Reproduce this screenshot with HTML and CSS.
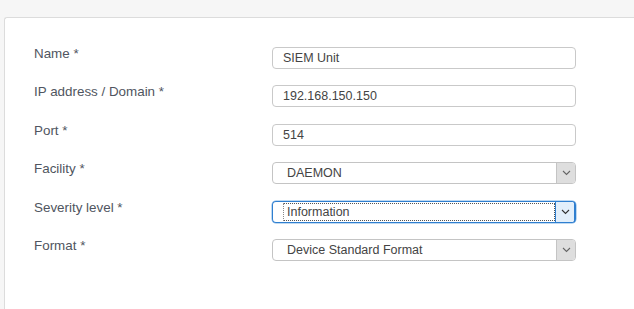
FILE: index.html
```html
<!DOCTYPE html>
<html lang="en">
<head>
    <meta charset="UTF-8">
    <meta name="viewport" content="width=device-width, initial-scale=1.0">
    <title>Syslog Server</title>
    <link rel="stylesheet" href="styles.css">
</head>
<body>
    <div class="card">
        <!-- Campos do servidor syslog -->
        <div class="form">
            <label class="label">Name *</label>
            <div class="input">SIEM Unit</div>

            <label class="label">IP address / Domain *</label>
            <div class="input">192.168.150.150</div>

            <label class="label">Port *</label>
            <div class="input">514</div>

            <label class="label">Facility *</label>
            <div class="select">
                <span class="select-value">DAEMON</span>
                <span class="select-arrow">
                    <svg width="9" height="6" viewBox="0 0 9 6"><path d="M1 1l3.5 3.5L8 1" fill="none" stroke="#666" stroke-width="1.1"/></svg>
                </span>
            </div>

            <label class="label">Severity level *</label>
            <div class="select focused">
                <span class="select-value"><span class="focus-ring">Information</span></span>
                <span class="select-arrow">
                    <svg width="9" height="6" viewBox="0 0 9 6"><path d="M1 1l3.5 3.5L8 1" fill="none" stroke="#333" stroke-width="1.1"/></svg>
                </span>
            </div>

            <label class="label">Format *</label>
            <div class="select">
                <span class="select-value">Device Standard Format</span>
                <span class="select-arrow">
                    <svg width="9" height="6" viewBox="0 0 9 6"><path d="M1 1l3.5 3.5L8 1" fill="none" stroke="#666" stroke-width="1.1"/></svg>
                </span>
            </div>
        </div>
    </div>
</body>
</html>
```

FILE: styles.css
```css
* {
    margin: 0;
    padding: 0;
    box-sizing: border-box;
}

body {
    font-family: "Liberation Sans", Arial, sans-serif;
    background: #f6f6f6;
    color: #555;
    overflow: hidden;
    height: 309px;
}

/* Cartão do formulário */
.card {
    margin: 17px 0 0 4px;
    height: 292px;
    background: #fff;
    border: 1px solid #dcdcdc;
    border-right: none;
    border-bottom: none;
    border-radius: 3px 0 0 0;
    padding: 29px 0 0 29px;
}

.form {
    display: grid;
    grid-template-columns: 238px 304px;
    grid-auto-rows: 22px;
    row-gap: 16.4px;
}

.label {
    font-size: 13.4px;
    color: #505560;
    line-height: 14px;
}

.input {
    height: 22px;
    border: 1px solid #c9c9c9;
    border-radius: 4px;
    padding: 0 10px;
    font-size: 12.5px;
    line-height: 20px;
    color: #444;
}

/* Selects */
.select {
    display: flex;
    height: 22px;
    border: 1px solid #c4c4c4;
    border-radius: 4px;
    font-size: 12.5px;
    color: #444;
    overflow: hidden;
}

.select-value {
    flex: 1;
    padding: 0 0 0 14px;
    line-height: 20px;
}

.select-arrow {
    width: 19px;
    display: flex;
    align-items: center;
    justify-content: center;
    background: #dedede;
    border-left: 1px solid #c4c4c4;
}

.select.focused {
    border: 1px solid #2f7fd0;
    border-right-width: 2px;
    box-shadow: 0 0 0 0.5px #7fb3e6;
}

.select.focused .select-value {
    padding: 1px 0 1px 10px;
    line-height: 16px;
}

.focus-ring {
    display: block;
    height: 18px;
    border: 1px dotted #555;
    border-left-color: #888;
    padding-left: 3px;
    line-height: 16px;
}

.select.focused .select-arrow {
    background: #e2effb;
    border-left: 1px solid #2f7fd0;
}
```
